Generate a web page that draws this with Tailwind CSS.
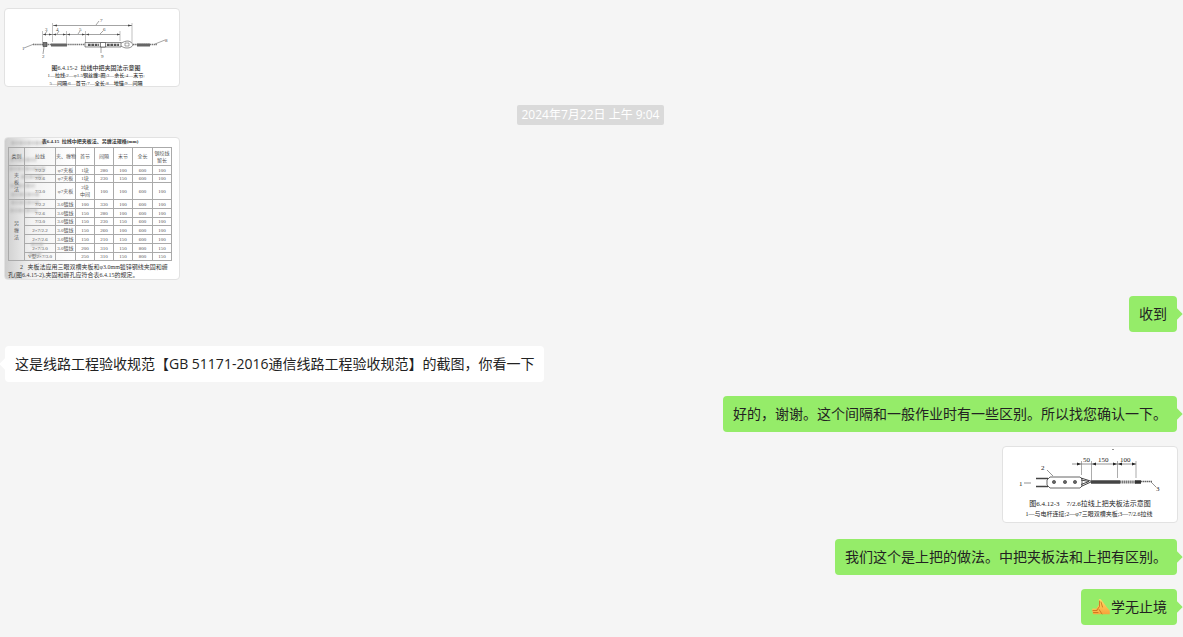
<!DOCTYPE html>
<html lang="zh-CN">

<head>
    <meta charset="UTF-8">
    <meta name="viewport" content="width=device-width, initial-scale=1.0">
    <title>聊天记录</title>
    <script src="https://cdn.jsdelivr.net/npm/@tailwindcss/browser@4"></script>
</head>

<body class="min-h-screen bg-[#f5f5f5] font-['Open_Sans','Noto_Sans_CJK_SC',sans-serif] text-[#222]">

    <main class="flex flex-col gap-3.5 pt-2 pb-3 pl-1 pr-1.5 text-sm leading-5">

        <!-- Picture: middle grip diagram -->
        <figure class="mb-0.5 w-44 self-start overflow-hidden rounded border border-[#e2e2e2] bg-white">
            <svg class="block h-[77px] w-full" viewBox="5 9 174 77" fill="none" stroke="#666" stroke-width=".6" font-family="Liberation Serif, Noto Sans CJK SC, serif">
                <path d="M52.500 23V42M132 23V43M42.500 31V43M66.500 31V43M85.500 31V43M120 31V41" stroke="#999" />
                <path d="M53 25.500H132M43 34.500H120" />
                <path d="M53 25.500l4-1v2zM132 25.500l-4-1v2zM43 34.500l3-1v2zM52 34.500l-3-1v2zM53 34.500l3-1v2zM66 34.500l-3-1v2zM67 34.500l3-1v2zM85 34.500l-3-1v2zM86 34.500l3-1v2zM120 34.500l-3-1v2z" fill="#444" stroke="none" />
                <path d="M96 25l3-4M45 34l2-3M57 34l2-3M78 34l2-3M100 34l3-3M24 48l10-4M155 44l10-4M43 54l1-7M101 53V46" />
                <path d="M33 44.500H52M66 44.500H86M133 44.500H157" stroke="#777" stroke-width="1.600" stroke-dasharray="1.500 .6" />
                <path d="M51 45H67" stroke="#666" stroke-width="3" />
                <path d="M137 45H150" stroke="#666" stroke-width="3" />
                <path d="M43 42.500h4v4h-4z" fill="#777" stroke="#333" />
                <path d="M85 42.500h36v4.500H85z" fill="#eee" stroke="#444" />
                <path d="M88 44.800H99M107 44.800H119" stroke="#555" stroke-width="2.200" stroke-dasharray="2.600 .8" />
                <path d="M100.500 42.500h5v4.500h-5z" fill="#fff" stroke="#333" />
                <path d="M121 43c3-1 4-2 7-2 3 .5 4 2 5 4-1 2-3 3-6 3-3 0-4-1-6-2" stroke="#444" />
                <path d="M125 43h4v3h-4z" />
                <g fill="#444" stroke="none" font-size="5">
                    <text x="100" y="22">7</text>
                    <text x="45" y="31">3</text>
                    <text x="56" y="31">4</text>
                    <text x="79" y="31">5</text>
                    <text x="103" y="31">6</text>
                    <text x="22" y="50">1</text>
                    <text x="42" y="58">2</text>
                    <text x="101" y="58">9</text>
                    <text x="165" y="42">8</text>
                </g>
                <g fill="#333" stroke="none" font-size="5" font-weight="500" text-anchor="middle">
                    <text x="96" y="70" font-size="6" xml:space="preserve">图6.4.15-2  拉线中把夹固法示意图</text>
                    <text x="96" y="77">1—拉线;2—φ1.5钢丝缠5圈;3—余长;4—末节;</text>
                    <text x="96" y="85">5—间隔;6—首节;7—全长;8—地锚;9—间隔</text>
                </g>
            </svg>
        </figure>

        <time datetime="2024-07-22T09:04" class="mt-0.5 -mb-0.5 self-center rounded-xs bg-[#dadada] px-1 text-xs leading-5 text-white">2024年7月22日 上午 9:04</time>

        <!-- Picture: scanned page with the size table -->
        <figure class="relative mb-0.5 h-[143px] w-44 self-start overflow-hidden rounded border border-[#e2e2e2] bg-linear-to-r from-[#cecece] via-[#f2f2f2] via-15% to-white to-40% px-[3px] font-['Liberation_Serif','Noto_Sans_CJK_SC',serif] text-[5px] leading-[7px] text-[#555]">
            <!-- print showing through from the other side of the page -->
            <svg class="absolute top-0 left-0 h-full w-16 blur-[1px]" viewBox="0 0 64 142" fill="none" stroke="#aaa" stroke-opacity=".5" stroke-width="4" stroke-dasharray="4 1 2 1">
                <path d="M6 5H40M5 22H31M4 31H40M16 39H38M5 48H30M6 57H34M6 65H34M5 73H32M26 107H38M24 117H36" />
            </svg>
            <table class="relative w-[163px] table-fixed border-collapse text-center">
                <caption class="h-[9px] text-center font-bold whitespace-nowrap text-[#333]">表6.4.15&nbsp; 拉线中把夹板法、另缠法规格(mm)</caption>
                <colgroup>
                    <col class="w-4">
                    <col class="w-[31px]">
                    <col class="w-5">
                    <col class="w-[19px]">
                    <col class="w-[19px]">
                    <col class="w-[19px]">
                    <col class="w-5">
                    <col class="w-[19px]">
                </colgroup>
                <thead class="[&_th]:border [&_th]:border-[#aaa] [&_th]:p-0 [&_th]:font-normal [&_th]:whitespace-nowrap">
                    <tr class="h-[18px]">
                        <th>类别</th>
                        <th>拉线</th>
                        <th>夹、缠物</th>
                        <th>首节</th>
                        <th>间隔</th>
                        <th>末节</th>
                        <th>全长</th>
                        <th>钢绞线<br>留长</th>
                    </tr>
                </thead>
                <tbody id="size-rows" class="[&_td]:border [&_td]:border-[#aaa] [&_td]:p-0 [&_td]:whitespace-nowrap"></tbody>
            </table>
            <div class="relative pt-0.5 text-[6px] leading-[8px] whitespace-nowrap text-[#333]">
                <p class="pl-3">2 &nbsp; 夹板法应用三眼双槽夹板和φ3.0mm镀锌钢线夹固和缠</p>
                <p>孔(图6.4.15-2),夹固和缠孔应符合表6.4.15的规定。</p>
            </div>
        </figure>

        <div class="relative self-end rounded bg-[#95ec69] px-2.5 py-2">
            <span class="absolute top-3.5 -right-1 size-2 rotate-45 bg-[#95ec69]"></span>
            <p class="relative">收到</p>
        </div>

        <div class="relative ml-px self-start rounded bg-white px-2.5 py-2">
            <span class="absolute top-3.5 -left-1 size-2 rotate-45 bg-white"></span>
            <p class="relative">这是线路工程验收规范【GB 51171-2016通信线路工程验收规范】的截图，你看一下</p>
        </div>

        <div class="relative self-end rounded bg-[#95ec69] px-2.5 py-2">
            <span class="absolute top-3.5 -right-1 size-2 rotate-45 bg-[#95ec69]"></span>
            <p class="relative">好的，谢谢。这个间隔和一般作业时有一些区别。所以找您确认一下。</p>
        </div>

        <!-- Picture: upper grip diagram -->
        <figure class="-mr-px mb-0.5 w-44 self-end overflow-hidden rounded border border-[#e2e2e2] bg-white">
            <svg class="block h-[75px] w-full" viewBox="1003 447 174 75" fill="none" stroke="#666" stroke-width=".7" font-family="Liberation Serif, Noto Sans CJK SC, serif">
                <path d="M1081.500 461V475M1091.500 461V480M1117.500 461V478M1136 461V478" stroke="#888" />
                <path d="M1072 464H1136" />
                <path d="M1081 464l-4-1.500v3zM1092 464l4-1.500v3zM1117 464l-4-1.500v3zM1118 464l4-1.500v3zM1136 464l-4-1.500v3z" fill="#222" stroke="none" />
                <path d="M1036 478.500H1048M1036 486.500H1048" stroke="#444" stroke-width="1.400" />
                <path d="M1047 480l3-3h30l2 2v7l-2 2h-30l-3-3z" fill="#fff" stroke="#666" stroke-width="1" />
                <path d="M1081 478l11 3.500-11 5M1081 480l8 1.500-8 3" stroke="#444" stroke-width="1" />
                <g fill="#666" stroke="#444">
                    <circle cx="1054" cy="482" r="1.600" />
                    <circle cx="1065" cy="482" r="1.600" />
                    <circle cx="1075" cy="482" r="1.600" />
                </g>
                <path d="M1091 482H1120" stroke="#444" stroke-width="3.600" />
                <path d="M1120 482H1136" stroke="#777" stroke-width="3" stroke-dasharray="1.400 .5" />
                <path d="M1135 482H1141" stroke="#333" stroke-width="3.400" />
                <path d="M1141 481.500H1152" stroke="#666" stroke-width="1.600" stroke-dasharray="1.500 .5" />
                <path d="M1047 470l6 6M1151 482l5 5M1024 483h7" />
                <path d="M1112 449.500h2" />
                <g fill="#222" stroke="none" font-size="7">
                    <text x="1083" y="462">50</text>
                    <text x="1098" y="462">150</text>
                    <text x="1120" y="462">100</text>
                    <text x="1041" y="470">2</text>
                    <text x="1019" y="486">1</text>
                    <text x="1156" y="491">3</text>
                </g>
                <g fill="#222" stroke="none" font-size="6" text-anchor="middle">
                    <text x="1090" y="506" font-size="7" xml:space="preserve">图6.4.12-3    7/2.6拉线上把夹板法示意图</text>
                    <text x="1089" y="516">1—与电杆连接;2—φ7三眼双槽夹板;3—7/2.6拉线</text>
                </g>
            </svg>
        </figure>

        <div class="relative self-end rounded bg-[#95ec69] px-2.5 py-2">
            <span class="absolute top-3.5 -right-1 size-2 rotate-45 bg-[#95ec69]"></span>
            <p class="relative">我们这个是上把的做法。中把夹板法和上把有区别。</p>
        </div>

        <div class="relative self-end rounded bg-[#95ec69] px-2.5 py-2">
            <span class="absolute top-3.5 -right-1 size-2 rotate-45 bg-[#95ec69]"></span>
            <p class="relative flex items-center">
                <!-- folded hands emoji -->
                <svg class="size-5" viewBox="0 0 20 20" role="img" aria-label="合十">
                    <defs>
                        <linearGradient id="skin" x1="0" y1="0" x2="0" y2="1">
                            <stop offset="0" stop-color="#ffdc68" />
                            <stop offset="1" stop-color="#f8a33a" />
                        </linearGradient>
                    </defs>
                    <path d="M1 12.500c0-1 1-1.200 2-1L6.500 12l2-3.500L11 14l-1 3.200H3c-1.400 0-1.600-1.200-1-2-1-.4-1-1.400-.4-1.800z" fill="url(#skin)" />
                    <path d="M7.800 2.800c.4-1.300 2-.9 2.500 0L16 10.500l2.800 3.300v3.400H11L7.800 12 6 13.800c-1 .8-2 0-1.400-1L8 7.500z" fill="url(#skin)" />
                    <path d="M8.500 4v5.500L6 13M10 5l1.500 5M2 13.500h4M2.500 15.500H7M8 12.500l3 4.500" fill="none" stroke="#c96a18" stroke-width=".8" stroke-linecap="round" />
                </svg>
                <span>学无止境</span>
            </p>
        </div>

    </main>

    <script>
        const rows = [
            ['7/2.2', 'φ7夹板', '1块', 280, 100, 600, 100],
            ['7/2.6', 'φ7夹板', '1块', 230, 150, 600, 100],
            ['7/3.0', 'φ7夹板', '2块<br>中间', 100, 100, 600, 100],
            ['7/2.2', '3.0镀线', 100, 330, 100, 600, 100],
            ['7/2.6', '3.0镀线', 150, 280, 100, 600, 100],
            ['7/3.0', '3.0镀线', 150, 230, 150, 600, 100],
            ['2×7/2.2', '3.0镀线', 150, 260, 100, 600, 100],
            ['2×7/2.6', '3.0镀线', 150, 210, 150, 600, 100],
            ['2×7/3.0', '3.0镀线', 200, 310, 150, 800, 150],
            ['V型2×7/3.0', '', 250, 310, 150, 800, 150]
        ];

        // First column is merged: rows 0-2 and rows 3-9
        const groups = {
            0: '<td rowspan="3">夹<br>板<br>法</td>',
            3: '<td rowspan="7">另<br>缠<br>法</td>'
        };

        function rowHeight(i) {
            if (i === 2) return 'h-[17px]';
            return i % 4 === 1 ? 'h-[8px]' : 'h-[9px]';
        }

        document.getElementById('size-rows').innerHTML = rows.map((row, i) => `
            <tr class="${rowHeight(i)}">
                ${groups[i] || ''}${row.map(cell => `<td>${cell}</td>`).join('')}
            </tr>
        `).join('');
    </script>

</body>

</html>
